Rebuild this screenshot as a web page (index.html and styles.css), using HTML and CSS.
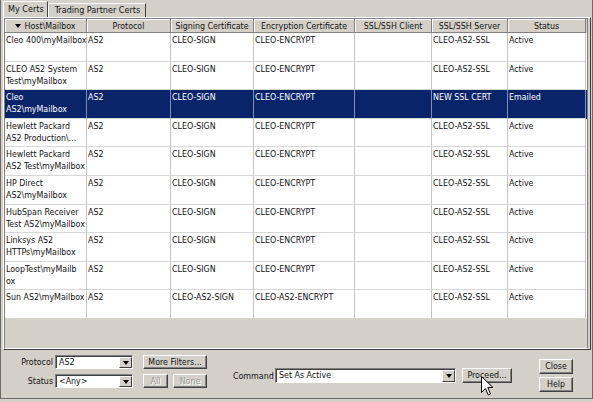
FILE: index.html
```html
<!DOCTYPE html>
<html>
<head>
<meta charset="utf-8">
<link rel="stylesheet" href="styles.css">
</head>
<body>
<div class="window">
  <div class="tabs">
    <div class="tab active">My Certs</div>
    <div class="tab">Trading Partner Certs</div>
  </div>
  <div class="panel">
    <div class="grid">
      <div class="row head">
        <div class="hc"><span class="sort"></span>Host\Mailbox</div>
        <div class="hc">Protocol</div>
        <div class="hc">Signing Certificate</div>
        <div class="hc">Encryption Certificate</div>
        <div class="hc">SSL/SSH Client</div>
        <div class="hc">SSL/SSH Server</div>
        <div class="hc">Status</div>
      </div>
      <div class="row">
        <div class="c">Cleo 400\myMailbox</div><div class="c">AS2</div><div class="c">CLEO-SIGN</div><div class="c">CLEO-ENCRYPT</div><div class="c"></div><div class="c">CLEO-AS2-SSL</div><div class="c">Active</div>
      </div>
      <div class="row">
        <div class="c">CLEO AS2 System<br>Test\myMailbox</div><div class="c">AS2</div><div class="c">CLEO-SIGN</div><div class="c">CLEO-ENCRYPT</div><div class="c"></div><div class="c">CLEO-AS2-SSL</div><div class="c">Active</div>
      </div>
      <div class="row sel">
        <div class="c">Cleo<br>AS2\myMailbox</div><div class="c">AS2</div><div class="c">CLEO-SIGN</div><div class="c">CLEO-ENCRYPT</div><div class="c"></div><div class="c">NEW SSL CERT</div><div class="c">Emailed</div>
      </div>
      <div class="row">
        <div class="c">Hewlett Packard<br>AS2 Production\...</div><div class="c">AS2</div><div class="c">CLEO-SIGN</div><div class="c">CLEO-ENCRYPT</div><div class="c"></div><div class="c">CLEO-AS2-SSL</div><div class="c">Active</div>
      </div>
      <div class="row">
        <div class="c">Hewlett Packard<br>AS2 Test\myMailbox</div><div class="c">AS2</div><div class="c">CLEO-SIGN</div><div class="c">CLEO-ENCRYPT</div><div class="c"></div><div class="c">CLEO-AS2-SSL</div><div class="c">Active</div>
      </div>
      <div class="row">
        <div class="c">HP Direct<br>AS2\myMailbox</div><div class="c">AS2</div><div class="c">CLEO-SIGN</div><div class="c">CLEO-ENCRYPT</div><div class="c"></div><div class="c">CLEO-AS2-SSL</div><div class="c">Active</div>
      </div>
      <div class="row">
        <div class="c">HubSpan Receiver<br>Test AS2\myMailbox</div><div class="c">AS2</div><div class="c">CLEO-SIGN</div><div class="c">CLEO-ENCRYPT</div><div class="c"></div><div class="c">CLEO-AS2-SSL</div><div class="c">Active</div>
      </div>
      <div class="row">
        <div class="c">Linksys AS2<br>HTTPs\myMailbox</div><div class="c">AS2</div><div class="c">CLEO-SIGN</div><div class="c">CLEO-ENCRYPT</div><div class="c"></div><div class="c">CLEO-AS2-SSL</div><div class="c">Active</div>
      </div>
      <div class="row">
        <div class="c">LoopTest\myMailb<br>ox</div><div class="c">AS2</div><div class="c">CLEO-SIGN</div><div class="c">CLEO-ENCRYPT</div><div class="c"></div><div class="c">CLEO-AS2-SSL</div><div class="c">Active</div>
      </div>
      <div class="row">
        <div class="c">Sun AS2\myMailbox</div><div class="c">AS2</div><div class="c">CLEO-AS2-SIGN</div><div class="c">CLEO-AS2-ENCRYPT</div><div class="c"></div><div class="c">CLEO-AS2-SSL</div><div class="c">Active</div>
      </div>
    </div>
  </div>
  <div class="controls">
    <div class="filters">
      <div class="lbl">Protocol</div>
      <div class="combo small"><span class="val">AS2</span><span class="drop"></span></div>
      <div class="lbl">Status</div>
      <div class="combo small"><span class="val">&lt;Any&gt;</span><span class="drop"></span></div>
    </div>
    <div class="fbtns">
      <div class="btn more">More Filters...</div>
      <div class="btnrow">
        <div class="btn dis all">All</div>
        <div class="btn dis none">None</div>
      </div>
    </div>
    <div class="command">
      <div class="clbl">Command</div>
      <div class="combo wide"><span class="val">Set As Active</span><span class="drop"></span></div>
      <div class="btn proceed">Proceed...</div>
    </div>
    <div class="side">
      <div class="btn close">Close</div>
      <div class="btn help">Help</div>
    </div>
  </div>
  <svg class="cursor" width="13" height="20" viewBox="0 0 13 20"><path d="M0.5 0.5 L0.5 16.5 L4.5 12.5 L7.3 19 L9.5 18 L6.8 11.5 L12 11.5 Z" fill="#fff" stroke="#000" stroke-width="1"/></svg>
</div>
</body>
</html>
```
FILE: styles.css
```css
* { box-sizing: border-box; }
html, body { margin: 0; padding: 0; background: #d4d0c8; }
body {
  font-family: "DejaVu Sans Condensed", "DejaVu Sans", sans-serif;
  font-stretch: condensed;
  font-size: 8.8px;
  color: #111;
  width: 593px;
  height: 402px;
  overflow: hidden;
}
.window {
  position: relative;
  width: 593px;
  height: 399px;
  border-left: 1px solid #6a6a6a;
  border-right: 1px solid #6a6a6a;
  border-bottom: 1px solid #6a6a6a;
  display: flex;
  flex-direction: column;
}
.tabs {
  display: flex;
  align-items: flex-end;
  height: 17px;
  padding-left: 2px;
}
.tab {
  height: 14px;
  padding: 0 5px 0 6px;
  border: 1px solid;
  border-color: #fff #404040 transparent #fff;
  border-bottom: none;
  line-height: 12px;
  font-size: 9px;
  white-space: nowrap;
}
.tab.active {
  height: 16px;
  line-height: 14px;
  padding: 0 3px 0 4px;
}
.panel {
  margin: 0 1px 0 2px;
  width: 588px;
  height: 333px;
  border: 1px solid;
  border-color: #fff #404040 #404040 #fff;
  padding-right: 2px;
}
.grid {
  width: 584px;
  height: 331px;
  border: 1px solid;
  border-color: #808080 #808080 #fff #808080;
  background: #d4d0c8;
}
.row {
  display: grid;
  grid-template-columns: 82px 84px 83px 101px 77px 76px 78px;
  height: 28.6px;
  background: #fff;
}
.row.head {
  height: 14px;
  background: #d4d0c8;
}
.hc {
  border-right: 1px solid #808080;
  border-bottom: 1px solid #808080;
  box-shadow: inset 1px 1px #fff;
  text-align: center;
  line-height: 12px;
  white-space: nowrap;
  overflow: hidden;
  display: flex;
  align-items: center;
  justify-content: center;
}
.sort {
  display: inline-block;
  width: 0;
  height: 0;
  border-left: 3px solid transparent;
  border-right: 3px solid transparent;
  border-top: 4px solid #000;
  margin-right: 3px;
}
.c {
  border-right: 1px solid #c4c4c4;
  border-bottom: 1px solid #d8d8d8;
  padding: 1px 0 0 1px;
  line-height: 12px;
  white-space: nowrap;
  overflow: hidden;
}
.row.sel { background: #0a246a; color: #fff; }
.row.sel .c { border-right-color: #7d8fb8; }

.controls {
  display: flex;
  height: 48px;
  padding-top: 5px;
}
.filters {
  display: grid;
  grid-template-columns: 50px 78px;
  grid-template-rows: 14px 14px;
  column-gap: 2px;
  row-gap: 5px;
  margin-left: 2px;
  align-self: flex-start;
}
.lbl {
  text-align: right;
  line-height: 14px;
}
.combo {
  display: flex;
  height: 15px;
  background: #fff;
  border: 1px solid;
  border-color: #808080 #fff #fff #808080;
  box-shadow: inset 1px 1px #404040;
  padding: 1px 0 0 1px;
}
.filters .combo { height: 14px; }
.combo .val {
  flex: 1;
  line-height: 11px;
  padding-left: 2px;
  white-space: nowrap;
}
.drop {
  width: 13px;
  height: 100%;
  background: #d4d0c8;
  border: 1px solid;
  border-color: #fff #404040 #404040 #fff;
  display: flex;
  align-items: center;
  justify-content: center;
}
.drop::after {
  content: "";
  width: 0;
  height: 0;
  border-left: 3.5px solid transparent;
  border-right: 3.5px solid transparent;
  border-top: 4px solid #000;
}
.combo.wide { width: 181px; }
.btn {
  height: 14px;
  background: #d4d0c8;
  border: 1px solid;
  border-color: #fff #404040 #404040 #fff;
  box-shadow: inset -1px -1px #808080;
  text-align: center;
  line-height: 12px;
  white-space: nowrap;
}
.btn.dis { color: #9a968e; text-shadow: 1px 1px #fff; }
.fbtns {
  margin-left: 10px;
  display: flex;
  flex-direction: column;
  gap: 5px;
  align-self: flex-start;
}
.more { width: 64px; }
.btnrow { display: flex; gap: 5px; }
.all { width: 25px; }
.none { width: 34px; }
.command {
  display: flex;
  align-items: center;
  margin-left: 26px;
  margin-top: 13px;
  align-self: flex-start;
}
.clbl { width: 42px; }
.proceed { width: 50px; margin-left: 6px; height: 15px; }
.side {
  margin-left: 27px;
  margin-top: 4px;
  display: flex;
  flex-direction: column;
  gap: 3px;
  align-self: flex-start;
}
.close { width: 34px; height: 15px; line-height: 13px; }
.help { width: 34px; height: 15px; line-height: 13px; }
.cursor {
  position: absolute;
  left: 480px;
  top: 376px;
}
```
